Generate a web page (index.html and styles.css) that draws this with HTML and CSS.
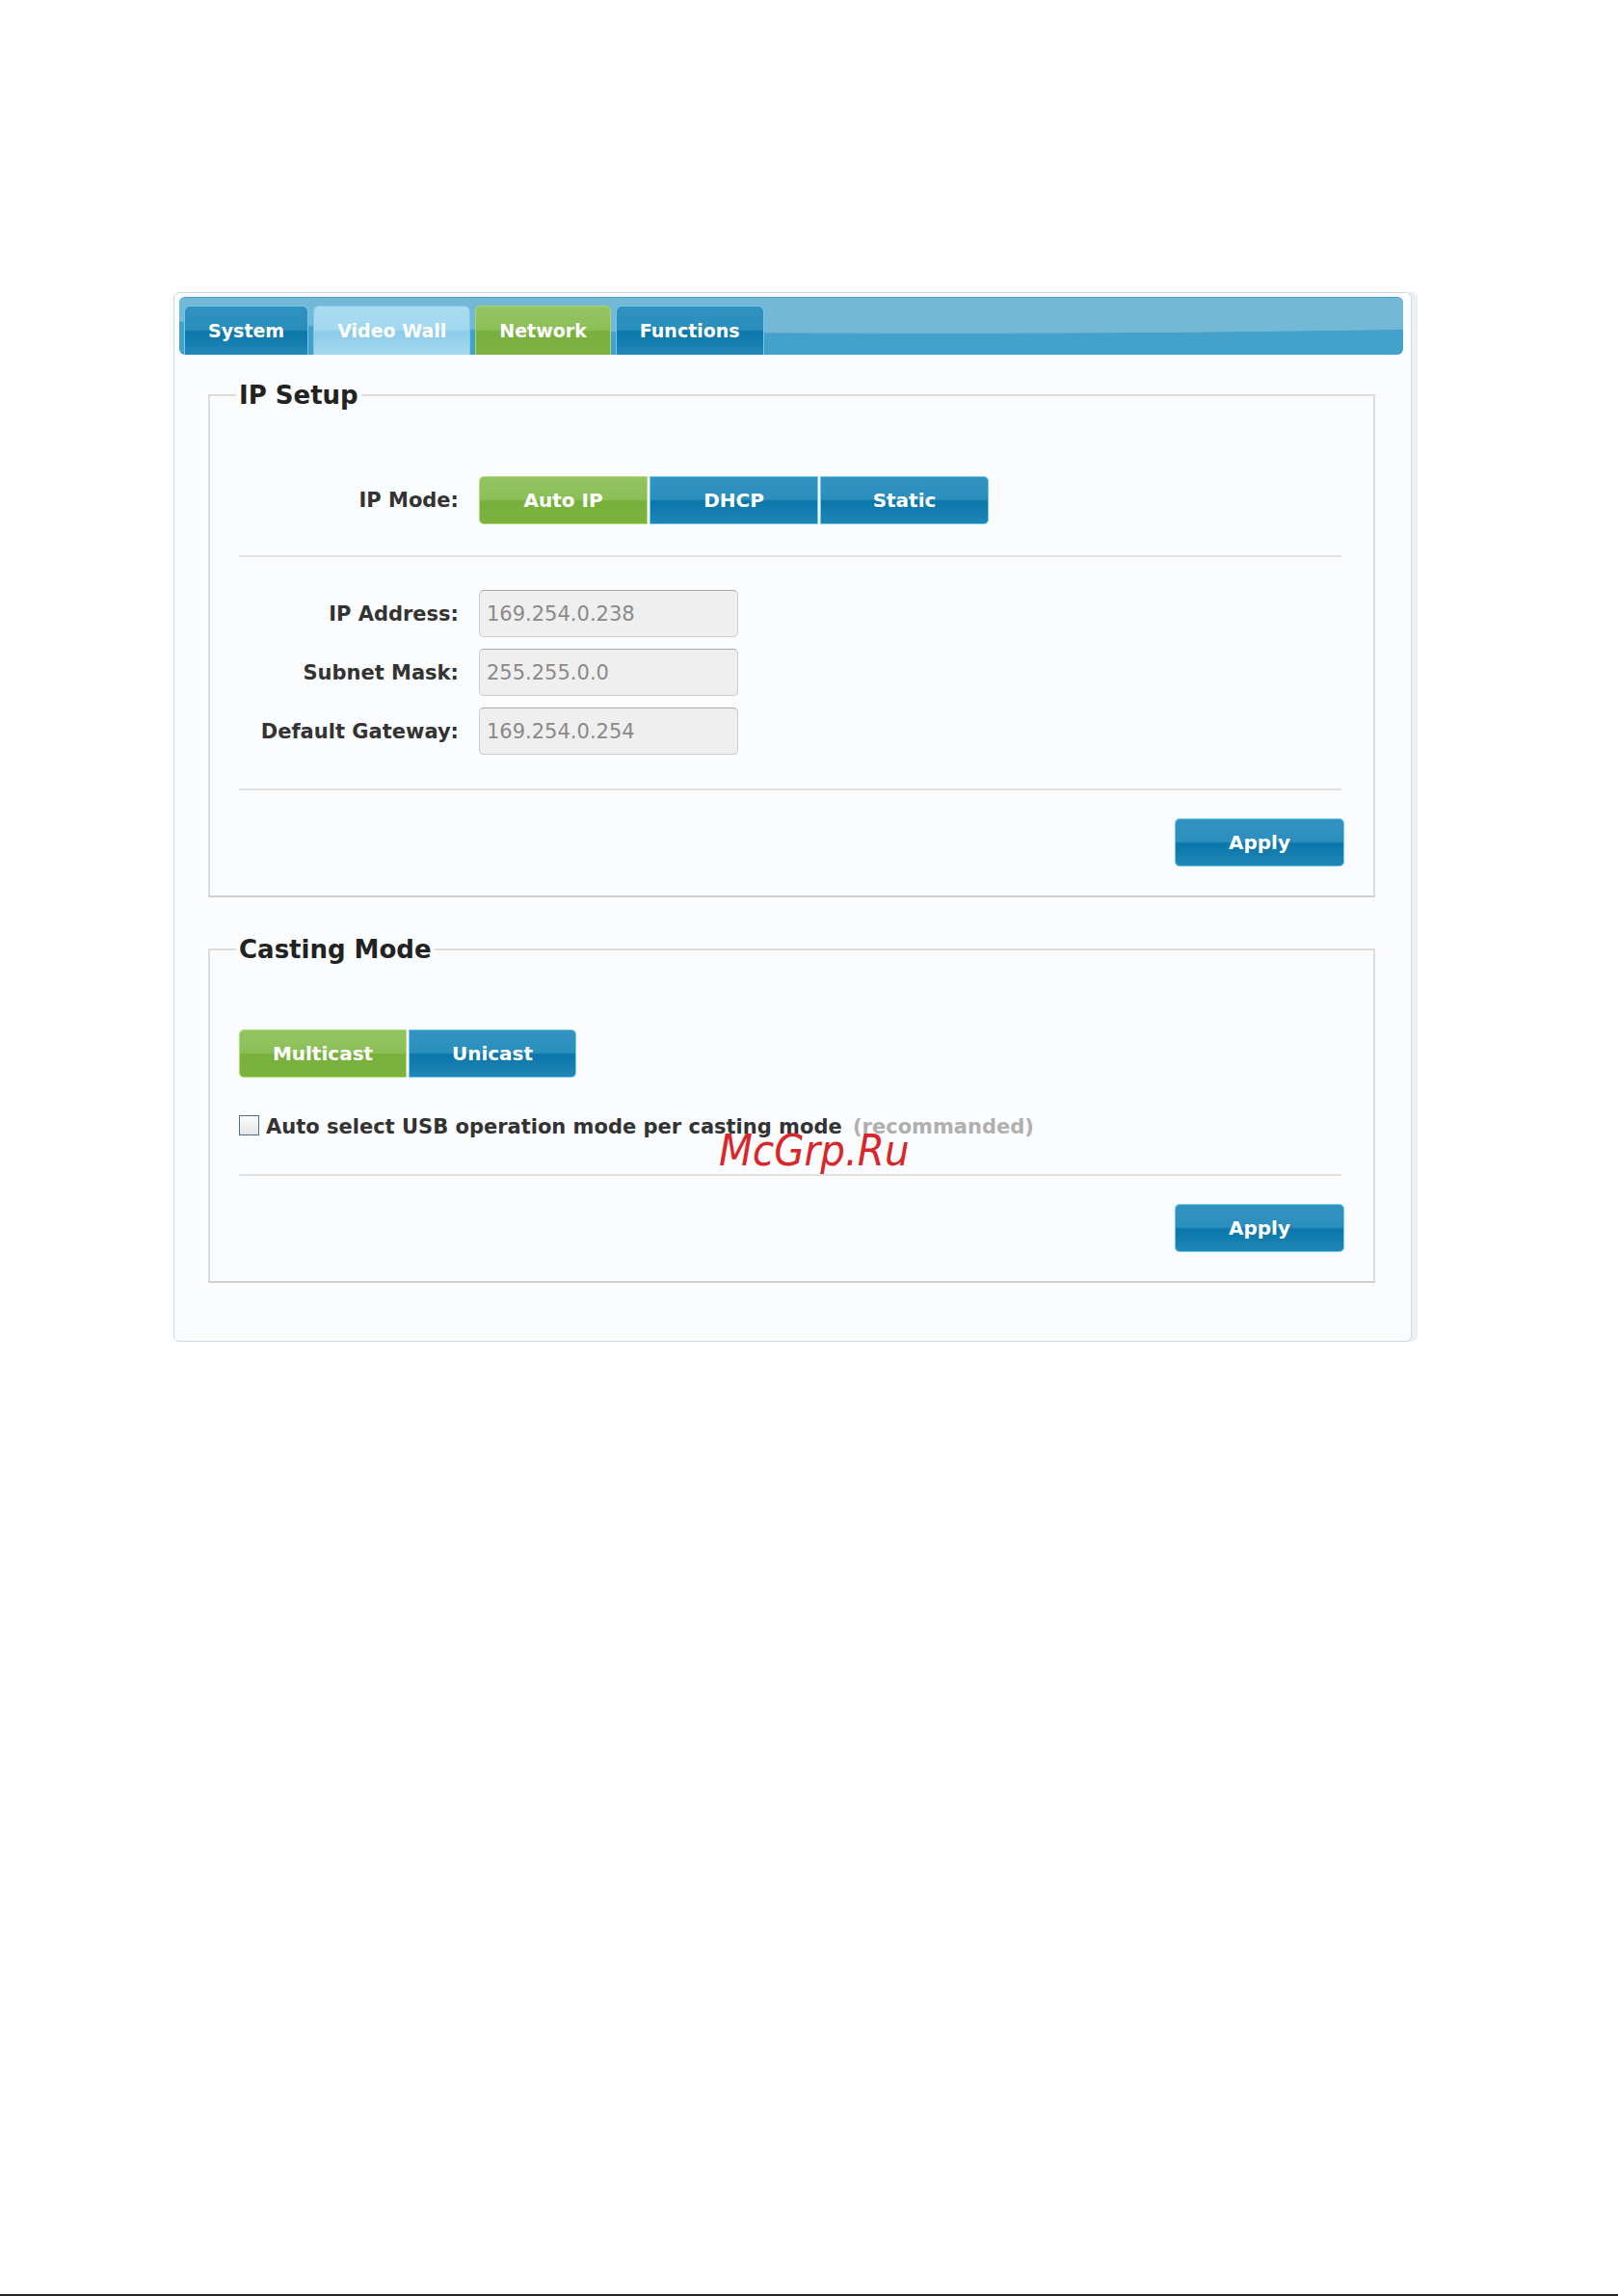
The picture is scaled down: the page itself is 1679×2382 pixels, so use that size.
FILE: index.html
```html
<!DOCTYPE html>
<html lang="en">
<head>
    <meta charset="UTF-8">
    <title>Network Settings</title>
    <link rel="stylesheet" href="styles.css">
</head>
<body>

    <div class="page">
        <div class="panel">
            <div class="tabbar">
                <a class="tab">System</a>
                <a class="tab tab-light">Video Wall</a>
                <a class="tab tab-active">Network</a>
                <a class="tab">Functions</a>
            </div>

            <div class="content">
                <!-- IP setup -->
                <fieldset class="group">
                    <legend>IP Setup</legend>
                    <div class="form-row mode-row">
                        <label class="field-label">IP Mode:</label>
                        <div class="btn-group">
                            <button class="btn btn-green">Auto IP</button>
                            <button class="btn">DHCP</button>
                            <button class="btn">Static</button>
                        </div>
                    </div>
                    <hr class="divider">
                    <div class="fields">
                        <div class="form-row">
                            <label class="field-label">IP Address:</label>
                            <input class="text-input" type="text" value="169.254.0.238" disabled>
                        </div>
                        <div class="form-row">
                            <label class="field-label">Subnet Mask:</label>
                            <input class="text-input" type="text" value="255.255.0.0" disabled>
                        </div>
                        <div class="form-row">
                            <label class="field-label">Default Gateway:</label>
                            <input class="text-input" type="text" value="169.254.0.254" disabled>
                        </div>
                    </div>
                    <hr class="divider divider-low">
                    <div class="actions">
                        <button class="btn btn-apply">Apply</button>
                    </div>
                </fieldset>

                <!-- Casting mode -->
                <fieldset class="group group-casting">
                    <legend>Casting Mode</legend>
                    <div class="btn-group cast-group">
                        <button class="btn btn-green btn-cast">Multicast</button>
                        <button class="btn btn-cast">Unicast</button>
                    </div>
                    <label class="check-row">
                        <input class="check" type="checkbox">
                        <span>Auto select USB operation mode per casting mode <span class="hint">(recommanded)</span></span>
                    </label>
                    <hr class="divider divider-cast">
                    <div class="actions">
                        <button class="btn btn-apply">Apply</button>
                    </div>
                </fieldset>
            </div>
        </div>

        <div class="watermark">McGrp.Ru</div>
    </div>

</body>
</html>
```

FILE: styles.css
```css
body {
    margin: 0;
    background: #fff;
    font-family: "DejaVu Sans", "Liberation Sans", sans-serif;
    color: #333;
}
.page {
    height: 2382px;
    box-sizing: border-box;
    padding: 303px 0 0 180px;
    border-bottom: 2px solid #222;
}
.panel {
    width: 1285px;
    height: 1089px;
    box-sizing: border-box;
    border: 1px solid #c3dbea;
    border-radius: 6px;
    background: #fbfcfd;
    box-shadow: 6px 0 0 #efefef;
}

/* tabs */
.tabbar {
    display: flex;
    align-items: flex-end;
    gap: 5px;
    height: 60px;
    box-sizing: border-box;
    margin: 4px 8px 0 5px;
    padding-left: 5px;
    border-top: 1px solid #4d9fcb;
    border-radius: 6px;
    background:
        radial-gradient(ellipse 85% 63% at 62% 0, #73b8d6 98%, #44a1ca 100%);
}
.tab {
    height: 51px;
    line-height: 50px;
    box-sizing: border-box;
    padding: 0 24px;
    color: #fff;
    font-size: 19px;
    font-weight: bold;
    border: 1px solid #74c7ec;
    border-bottom: none;
    border-radius: 6px 6px 0 0;
    background: linear-gradient(#2f92bf 0%, #2a8ebc 48%, #0a76a9 52%, #2388b8 100%);
    cursor: pointer;
}
.tab-light {
    border-color: #7fc6e8;
    background: linear-gradient(#a9dbf1 0%, #a2d8f0 48%, #8bcbea 52%, #a5d9f0 100%);
}
.tab-active {
    border-color: #a8d86d;
    background: linear-gradient(#94c463 0%, #8cbf58 48%, #78b03d 52%, #7db340 100%);
}

/* groups */
.content {
    padding: 27px 37px 0 35px;
}
.group {
    margin: 0;
    padding: 0 33px 30px 30px;
    border: 2px solid #dcdcdc;
    border-bottom-color: #cfcfcf;
}
.group legend {
    margin-left: -3px;
    padding: 0 3px;
    font-size: 26px;
    line-height: 30px;
    font-weight: bold;
    color: #222;
}
.group-casting {
    margin-top: 39px;
}

.form-row {
    display: flex;
    align-items: center;
    gap: 21px;
}
.mode-row {
    margin-top: 69px;
}
.field-label {
    width: 228px;
    text-align: right;
    font-size: 21px;
    font-weight: bold;
    color: #333;
}
.fields {
    display: flex;
    flex-direction: column;
    gap: 12px;
    margin-top: 34px;
}
.text-input {
    width: 269px;
    height: 49px;
    box-sizing: border-box;
    padding: 0 7px;
    font-family: inherit;
    font-size: 21px;
    color: #8a8a8a;
    background: #efefef;
    border: 1px solid #cbcbcb;
    border-top-color: #a9a9a9;
    border-radius: 5px;
}

.divider {
    margin: 32px 0 0;
    border: none;
    border-top: 2px solid #e3e3e3;
}
.divider-low {
    margin-top: 35px;
}
.divider-cast {
    margin-top: 37px;
}

/* buttons */
.btn-group {
    display: flex;
    gap: 2px;
}
.btn {
    width: 175px;
    height: 50px;
    padding: 0;
    font-family: inherit;
    font-size: 20px;
    font-weight: bold;
    color: #fff;
    border: 1px solid #72c8ee;
    border-radius: 0;
    background: linear-gradient(#3193c0 0%, #2b8fbd 48%, #0a76a9 52%, #2086b7 100%);
    cursor: pointer;
}
.btn-group .btn:first-child { border-radius: 5px 0 0 5px; }
.btn-group .btn:last-child { border-radius: 0 5px 5px 0; }
.btn-green {
    border-color: #b2dc74;
    background: linear-gradient(#94c463 0%, #8cbf58 48%, #78b03d 52%, #7cb33f 100%);
}
.btn-cast {
    width: 174px;
}
.cast-group {
    margin-top: 68px;
}
.actions {
    display: flex;
    justify-content: flex-end;
    margin-top: 29px;
    margin-right: -3px;
}
.btn-apply {
    width: 176px;
    border-radius: 5px;
}

/* checkbox */
.check-row {
    display: flex;
    align-items: center;
    gap: 7px;
    margin-top: 39px;
    height: 24px;
    font-size: 21px;
    font-weight: bold;
    color: #333;
}
.check {
    appearance: none;
    width: 21px;
    height: 21px;
    margin: -4px 0 0;
    border: 1px solid #4b6f94;
    background: linear-gradient(#fdfdfd, #e4e4e4);
}
.hint {
    margin-left: 4px;
    color: #b0b0b0;
}

.watermark {
    position: absolute;
    left: 746px;
    top: 1168px;
    font-size: 44px;
    font-style: italic;
    color: #d9262a;
    transform: scaleX(0.92);
    transform-origin: left;
}
```
